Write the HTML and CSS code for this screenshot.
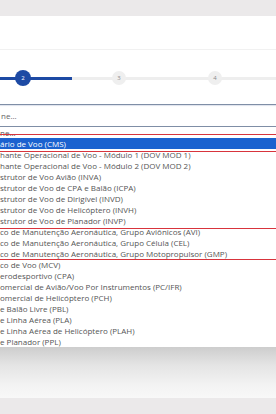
FILE: index.html
```html
<!DOCTYPE html>
<html lang="pt-BR">
<head>
    <meta charset="UTF-8">
    <meta name="viewport" content="width=device-width, initial-scale=1.0">
    <title>Cadastro - Habilitação</title>
    <link rel="stylesheet" href="styles.css">
</head>
<body>

    <!-- Painel principal -->
    <div class="panel">
        <div class="header"></div>

        <!-- Etapas do cadastro -->
        <div class="stepper">
            <div class="step active"><span>2</span></div>
            <div class="step"><span>3</span></div>
            <div class="step"><span>4</span></div>
        </div>

        <!-- Campo de seleção aberto -->
        <div class="select-box">ne...</div>

        <ul class="options">
            <li>ne...</li>
            <li class="selected">ário de Voo (CMS)</li>
            <li>hante Operacional de Voo - Módulo 1 (DOV MOD 1)</li>
            <li>hante Operacional de Voo - Módulo 2 (DOV MOD 2)</li>
            <li>strutor de Voo Avião (INVA)</li>
            <li>strutor de Voo de CPA e Balão (ICPA)</li>
            <li>strutor de Voo de Dirigível (INVD)</li>
            <li>strutor de Voo de Helicóptero (INVH)</li>
            <li>strutor de Voo de Planador (INVP)</li>
            <li>co de Manutenção Aeronáutica, Grupo Aviônicos (AVI)</li>
            <li>co de Manutenção Aeronáutica, Grupo Célula (CEL)</li>
            <li>co de Manutenção Aeronáutica, Grupo Motopropulsor (GMP)</li>
            <li>co de Voo (MCV)</li>
            <li>erodesportivo (CPA)</li>
            <li>omercial de Avião/Voo Por Instrumentos (PC/IFR)</li>
            <li>omercial de Helicóptero (PCH)</li>
            <li>e Balão Livre (PBL)</li>
            <li>e Linha Aérea (PLA)</li>
            <li>e Linha Aérea de Helicóptero (PLAH)</li>
            <li>e Planador (PPL)</li>

            <!-- Marcações em vermelho -->
            <div class="mark mark-one"></div>
            <div class="mark mark-two"></div>
        </ul>

        <div class="shade"></div>
    </div>

</body>
</html>
```

FILE: styles.css
```css
/* Página */
body {
    margin: 0;
    background: #ebe9ea;
    font-family: "Open Sans", "Liberation Sans", sans-serif;
    overflow: hidden;
    height: 414px;
}

/* Painel branco */
.panel {
    margin-top: 16px;
    height: 382px;
    background: #fff;
    overflow: hidden;
}

.header {
    height: 33px;
    border-bottom: 1px solid #f1f1f1;
}

/* Etapas */
.stepper {
    display: flex;
    margin: 20px 0 0 -25px;
    height: 16px;
    background:
        linear-gradient(#1d4aa4, #1d4aa4) 0 50% / 97px 3px no-repeat,
        linear-gradient(#eeeeee, #eeeeee) 0 50% / 100% 3px no-repeat;
}

.step {
    flex: 0 0 96px;
    display: flex;
    justify-content: center;
    align-items: center;
}

.step span {
    width: 14px;
    height: 14px;
    border-radius: 50%;
    background: #efefef;
    color: #8a8a8a;
    font-size: 6px;
    display: flex;
    justify-content: center;
    align-items: center;
}

.step.active span {
    width: 16px;
    height: 16px;
    background: #1d4aa4;
    color: #fff;
}

/* Campo de seleção */
.select-box {
    margin: 18px -10px 0;
    height: 21px;
    border: 1px solid #7f8ea6;
    padding-left: 10px;
    font-size: 8px;
    line-height: 21px;
    color: #666;
    box-shadow: inset 0 1px 1px rgba(120, 140, 180, 0.25);
}

/* Lista de opções */
.options {
    position: relative;
    list-style: none;
    margin: 0;
    padding: 0;
    height: 220px;
    background: #fff;
}

.options li {
    height: 11px;
    font-size: 8px;
    line-height: 11px;
    color: #555;
    white-space: nowrap;
}

.options li.selected {
    background: #1b62cf;
    color: #fff;
}

/* Retângulos de destaque */
.mark {
    position: absolute;
    left: -4px;
    right: -2px;
    border: 1px solid #d8343c;
}

.mark-one {
    top: 7px;
    height: 16px;
}

.mark-two {
    top: 101px;
    height: 30px;
}

/* Sombra abaixo da lista */
.shade {
    height: 51px;
    background: linear-gradient(#cdcdcd, #e4e4e4 35%, #f3f3f3 75%, #f8f8f8);
}
```
